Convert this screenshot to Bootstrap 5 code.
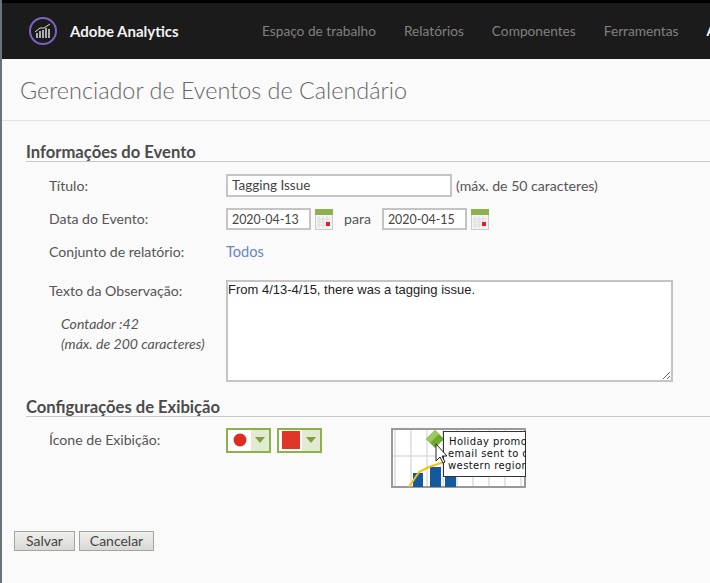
<!DOCTYPE html>
<html lang="en">
<head>
  <meta charset="UTF-8" />
  <meta name="viewport" content="width=device-width, initial-scale=1.0"/>
  <title>Gerenciador de Eventos de Calendário</title>
  <link href="https://cdn.jsdelivr.net/npm/bootstrap@5.3.3/dist/css/bootstrap.min.css" rel="stylesheet">
  <style>
    html, body { height: 100%; }
    body { background: #fafafa; color: #555; font-family: "Lato", "Liberation Sans", sans-serif; font-size: 14.1px; overflow: hidden; border-left: 2px solid #68737a; }
    .top-strip { height: 3px; background: #000; margin-left: -2px; }
    .app-bar { height: 56px; background: #1b1b1b; padding-left: 26px; white-space: nowrap; overflow: hidden; margin-left: -2px; border-left: 2px solid #4c4f52; }
    .app-bar svg, .app-bar span { flex: none; }
    .app-name { color: #f2f2f2; font-size: 15px; font-weight: 700; margin-left: 12px; width: 192px; }
    .app-link { color: #808080; font-size: 13.7px; margin-right: 28px; padding-top: 1px; }
    .page-title { height: 62px; font-size: 23.4px; font-weight: 300; color: #666; padding-left: 18px; border-bottom: 1px solid #e3e3e3; line-height: 63px; }
    .sect-head { font-size: 16.6px; font-weight: 700; color: #4b4b4b; border-bottom: 1px solid #c8c8c8; margin-left: 24px; line-height: 18px; }
    .form-line { padding-left: 47px; }
    .line-label { width: 177px; flex: none; }
    .plain-box { border: 2px solid #c4c4c4; background: #fff; color: #444; padding: 0 4px; height: 23px; font-size: 13.5px; line-height: 19px; }
    .date-box { width: 85px; height: 22px; font-size: 12.4px; }
    .cal-note { font-family: "Liberation Sans", sans-serif; color: #222; font-size: 13px; width: 447px; height: 102px; line-height: 15px; padding: 0; resize: both; border: 2px solid #c4c4c4; display: block; }
    .hint-italic { font-style: italic; margin-left: 12px; line-height: 20px; margin-top: 13px; }
    .pick-btn { border: 2px solid #8cb04a; background: #fff; height: 25px; display: flex; }
    .pick-mark { width: 23px; }
    .pick-arrow { width: 18px; background: #e2ebd2; }
    .form-act { background: linear-gradient(#efefec, #d8d8d4); border: 1px solid #a5a59f; color: #444; font-size: 14px; height: 20px; padding: 0; line-height: 17px; }
    .todos-link { color: #6a86bd; text-decoration: none; font-size: 14.6px; }
  </style>
</head>
<body>

  <div class="top-strip"></div>
  <nav class="app-bar d-flex align-items-center">
    <svg width="30" height="30" viewBox="0 0 30 30">
      <circle cx="15" cy="15" r="13" fill="none" stroke="#7b62c4" stroke-width="2"/>
      <path d="M9 22v-5M12 22v-7M15 22v-8M18 22v-10M21 22v-9" stroke="#ddd" stroke-width="1.5"/>
      <path d="M7 16l5-4 4 0 6-4" fill="none" stroke="#ddd" stroke-width="1"/>
    </svg>
    <span class="app-name">Adobe Analytics</span>
    <span class="app-link">Espaço de trabalho</span>
    <span class="app-link">Relatórios</span>
    <span class="app-link">Componentes</span>
    <span class="app-link">Ferramentas</span>
    <span class="app-link text-white fw-bold">A</span>
  </nav>

  <div class="page-title">Gerenciador de Eventos de Calendário</div>

  <div class="sect-head" style="margin-top:22px">Informações do Evento</div>

  <div class="form-line d-flex align-items-center" style="margin-top:12px">
    <div class="line-label">Título:</div>
    <div class="plain-box" style="width:226px">Tagging Issue</div>
    <div class="ms-1">(máx. de 50 caracteres)</div>
  </div>

  <div class="form-line d-flex align-items-center" style="margin-top:11px">
    <div class="line-label">Data do Evento:</div>
    <div class="plain-box date-box">2020-04-13</div>
    <svg class="ms-1" width="18" height="21" viewBox="0 0 18 21">
      <rect x=".5" y=".5" width="17" height="20" fill="#f3f3f3" stroke="#ccc"/>
      <path d="M2 10h14M2 13h14M2 16h14M4 7v12M8 7v12M12 7v12" stroke="#ddd"/>
      <rect width="18" height="6" fill="#8fb04e"/>
      <rect x="11" y="13" width="4" height="4" fill="#d22"/>
    </svg>
    <div style="margin:0 11px 0 11px">para</div>
    <div class="plain-box date-box">2020-04-15</div>
    <svg class="ms-1" width="18" height="21" viewBox="0 0 18 21">
      <rect x=".5" y=".5" width="17" height="20" fill="#f3f3f3" stroke="#ccc"/>
      <path d="M2 10h14M2 13h14M2 16h14M4 7v12M8 7v12M12 7v12" stroke="#ddd"/>
      <rect width="18" height="6" fill="#8fb04e"/>
      <rect x="11" y="13" width="4" height="4" fill="#d22"/>
    </svg>
  </div>

  <div class="form-line d-flex align-items-center" style="margin-top:11px">
    <div class="line-label">Conjunto de relatório:</div>
    <a class="todos-link" href="#">Todos</a>
  </div>

  <div class="form-line d-flex" style="margin-top:17px">
    <div class="line-label">
      <div>Texto da Observação:</div>
      <div class="hint-italic">Contador :42<br>(máx. de 200 caracteres)</div>
    </div>
    <textarea class="cal-note">From 4/13-4/15, there was a tagging issue.</textarea>
  </div>

  <div class="sect-head" style="margin-top:16px">Configurações de Exibição</div>

  <div class="form-line d-flex" style="margin-top:12px">
    <div class="line-label">Ícone de Exibição:</div>
    <div class="d-flex align-items-start" style="gap:6px;margin-top:-1px">
      <div class="pick-btn">
        <div class="pick-mark d-flex align-items-center justify-content-center"><svg width="14" height="14"><circle cx="7" cy="7" r="6.5" fill="#dd2c22"/></svg></div>
        <div class="pick-arrow d-flex align-items-center justify-content-center"><svg width="10" height="6"><path d="M0 0h10L5 6z" fill="#7d9f3c"/></svg></div>
      </div>
      <div class="pick-btn">
        <div class="pick-mark d-flex align-items-center justify-content-center"><svg width="18" height="18"><rect width="18" height="18" fill="#e2352a"/></svg></div>
        <div class="pick-arrow d-flex align-items-center justify-content-center"><svg width="10" height="6"><path d="M0 0h10L5 6z" fill="#7d9f3c"/></svg></div>
      </div>
    </div>
    <svg class="ms-auto" style="margin:-1px 184px 0 0" width="135" height="60" viewBox="0 0 135 60">
      <rect x="1" y="1" width="133" height="58" fill="#fff"/>
      <path d="M4 1v58M20 1v58M36 1v58M52 1v58M66 1v58M82 1v58M98 1v58M114 1v58M130 1v58M1 28h133" stroke="#ddd" stroke-width="1.5"/>
      <rect x="1" y="1" width="133" height="58" fill="none" stroke="#999" stroke-width="2"/>
      <path d="M22 45h10v14H22zM39 39h11v20H39zM54 40h11v19H54z" fill="#14589e"/>
      <path d="M18 59l10-15 10-5 12-4 15-2" fill="none" stroke="#f2c40f" stroke-width="2"/>
      <path d="M35 11l9-9 9 9-9 9z" fill="#6fa82e"/>
      <path d="M35 11l9-9 4 4-9 9z" fill="#9cc860"/>
      <rect x="52.5" y="3.5" width="82" height="45" fill="#fff" stroke="#333" stroke-width="1"/>
      <g font-family="DejaVu Sans, sans-serif" font-size="10" fill="#111" letter-spacing=".4">
        <text x="58" y="17">Holiday promo</text>
        <text x="57" y="29">email sent to c</text>
        <text x="57" y="41">western region</text>
      </g>
      <path d="M45 16l0 17 4-4 3 6 2-1-3-6h5z" fill="#fff" stroke="#222"/>
    </svg>
  </div>

  <div class="d-flex gap-1" style="margin:43px 0 0 12px">
    <button class="form-act" style="width:61px">Salvar</button>
    <button class="form-act" style="width:75px">Cancelar</button>
  </div>

  <script src="https://cdn.jsdelivr.net/npm/bootstrap@5.3.3/dist/js/bootstrap.bundle.min.js"></script>
</body>
</html>
